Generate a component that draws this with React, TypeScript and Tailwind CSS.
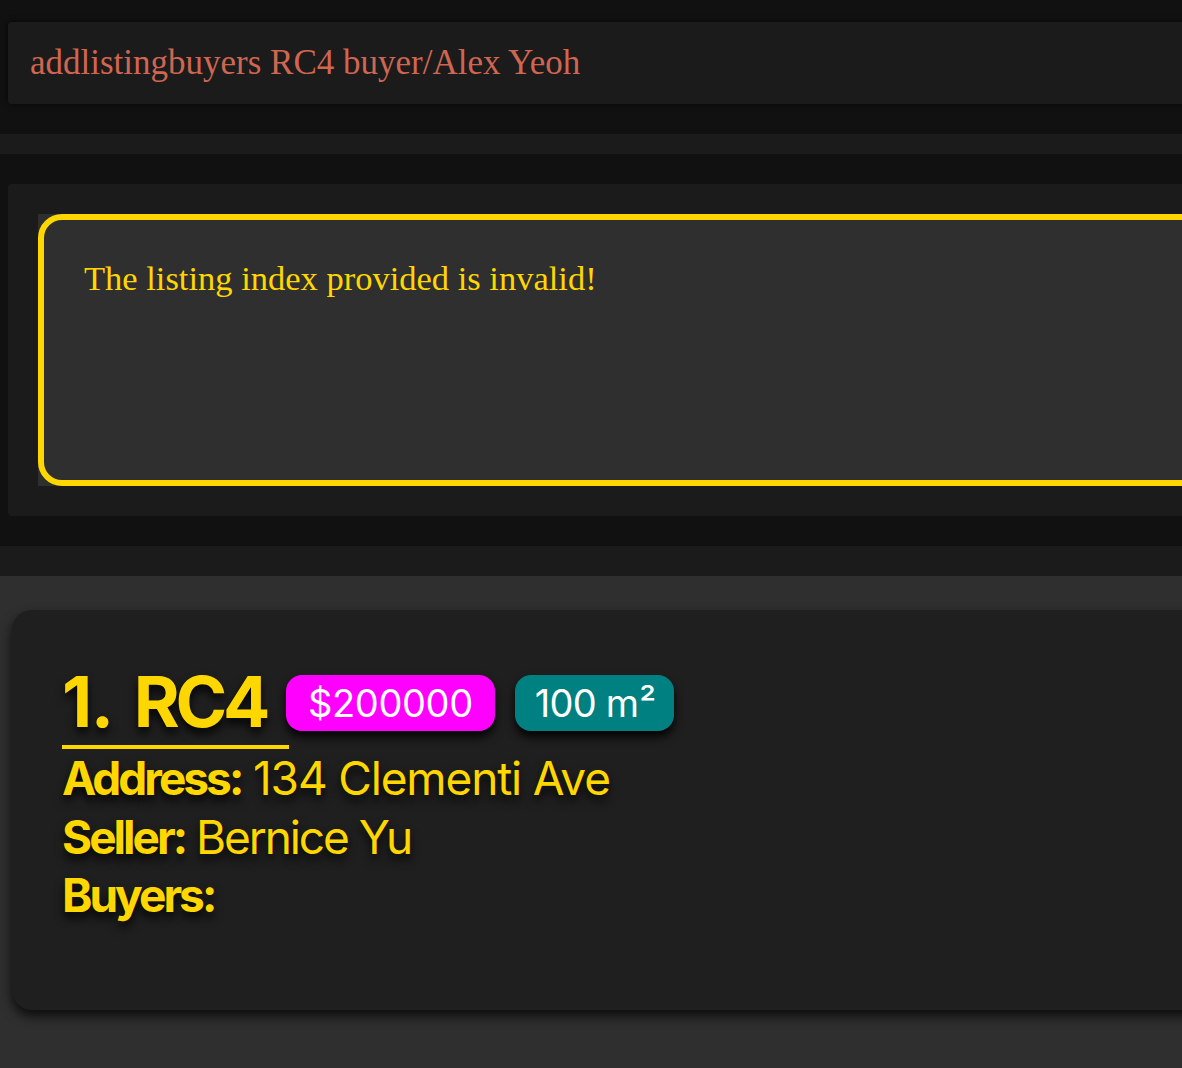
import React from "react";

const serif = { fontFamily: '"Liberation Serif", "DejaVu Serif", serif' };
const sans = { fontFamily: 'Inter, "Noto Sans", Roboto, sans-serif' };

export default function App() {
  return (
    <div className="min-h-[1068px] w-full overflow-hidden bg-[#111111]">
      {/* command box */}
      <div className="pt-[22px] pl-[8px]">
        <div className="flex h-[82px] w-[1300px] items-center rounded-[4px] bg-[#1b1b1b] pl-[22px] shadow-[0_0_6px_rgba(0,0,0,0.7)]">
          <span className="text-[35px] leading-[40px] text-[#d06651]" style={serif}>
            addlistingbuyers RC4 buyer/Alex Yeoh
          </span>
        </div>
      </div>

      <div className="mt-[30px] h-[20px] bg-[#1b1b1b]" />

      {/* result display */}
      <div className="pt-[30px] pl-[8px]">
        <div className="h-[332px] w-[1300px] rounded-[4px] bg-[#1b1b1b] p-[30px]">
          <div className="h-[272px] bg-[#2f2f2f]">
            <div className="h-full rounded-[24px] border-[6px] border-[#ffd700] pl-[40px] pt-[38px]">
              <p className="text-[34.5px] leading-[40px] text-[#ffd700]" style={serif}>
                The listing index provided is invalid!
              </p>
            </div>
          </div>
        </div>
      </div>

      <div className="mt-[30px] h-[30px] bg-[#1b1b1b]" />

      {/* listing panel */}
      <div className="bg-[#2f2f2f] pl-[12px] pt-[34px] pb-[58px]" style={sans}>
        <div className="h-[400px] w-[1300px] rounded-[20px] bg-[#1f1f1f] pl-[50px] pt-[57px] shadow-[0_6px_12px_rgba(0,0,0,0.75)]">
          <div className="flex items-start">
            <div className="w-[227px] border-b-4 border-[#ffd700] pb-[8px]">
              <span className="text-[70px] font-bold leading-[70px] text-[#ffd700] [text-shadow:0_6px_10px_rgba(0,0,0,0.85)]">
                <span className="tracking-[-0.02em]">1.</span>
                <span className="ml-[21px] tracking-[-0.06em]">RC4</span>
              </span>
            </div>
            <div className="ml-[-3px] mt-[8px] flex h-[56px] items-center rounded-[16px] bg-[#ff00ff] px-[22px] text-[38px] tracking-[-0.01em] text-white shadow-[0_6px_10px_rgba(0,0,0,0.9)]">
              $200000
            </div>
            <div className="ml-[20px] mt-[8px] flex h-[56px] items-center rounded-[16px] bg-[#008080] px-[20px] text-[38px] tracking-[-0.02em] text-white shadow-[0_6px_10px_rgba(0,0,0,0.9)]">
              100 m<span className="ml-[1px] tracking-[-0.05em]">²</span>
            </div>
          </div>
          <div className="text-[46px] leading-[58.5px] text-[#ffd700] [text-shadow:0_6px_10px_rgba(0,0,0,0.85)]">
            <div>
              <span className="font-bold tracking-[-0.065em]">Address:</span>
              <span className="tracking-[-0.025em]"> 134 Clementi Ave</span>
            </div>
            <div>
              <span className="font-bold tracking-[-0.065em]">Seller:</span>
              <span className="tracking-[-0.045em]"> Bernice Yu</span>
            </div>
            <div>
              <span className="font-bold tracking-[-0.065em]">Buyers:</span>
            </div>
          </div>
        </div>
      </div>
    </div>
  );
}
